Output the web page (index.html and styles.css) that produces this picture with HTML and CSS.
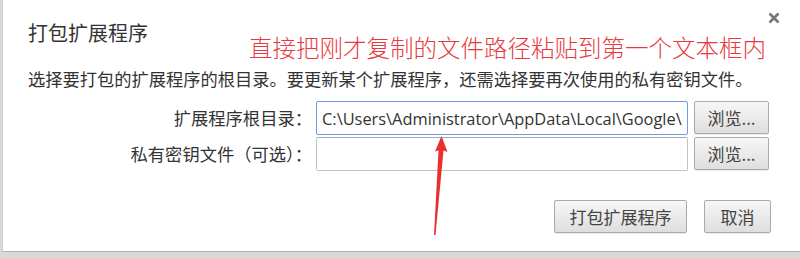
FILE: index.html
```html
<!DOCTYPE html>
<html lang="zh-CN">
    <head>
        <meta charset="UTF-8" />
        <title>打包扩展程序</title>
        <link rel="stylesheet" href="styles.css">
    </head>
    <body>
        <div class="dialog">
            <button class="close" aria-label="关闭">
                <svg width="12" height="12" viewBox="0 0 12 12">
                    <path d="M1.5 1.5 L10.5 10.5 M10.5 1.5 L1.5 10.5" stroke="#777" stroke-width="2.6" />
                </svg>
            </button>
            <div class="head">
                <h1 class="title">打包扩展程序</h1>
                <span class="note">直接把刚才复制的文件路径粘贴到第一个文本框内</span>
            </div>
            <p class="desc">选择要打包的扩展程序的根目录。要更新某个扩展程序，还需选择要再次使用的私有密钥文件。</p>
            <div class="form">
                <label class="label">扩展程序根目录：</label>
                <input class="field focused" type="text" value="C:\Users\Administrator\AppData\Local\Google\Chrome\User Data">
                <button class="btn browse">浏览...</button>
                <label class="label">私有密钥文件（可选）：</label>
                <input class="field" type="text" value="">
                <button class="btn browse">浏览...</button>
            </div>
            <div class="actions">
                <button class="btn pack">打包扩展程序</button>
                <button class="btn cancel">取消</button>
            </div>
        </div>

        <!-- annotation arrow -->
        <svg class="arrow" width="800" height="258" viewBox="0 0 800 258">
            <polygon points="441.5,136 447.5,152 443.5,150.5 435.5,235 434,235 438.5,150.5 435,151.5" fill="#e8302f" />
        </svg>
    </body>
</html>
```

FILE: styles.css
```css
body {
    margin: 0;
    width: 800px;
    height: 258px;
    overflow: hidden;
    background: #d9d9d9;
    font-family: "Noto Sans CJK SC", "Open Sans", sans-serif;
    color: #333;
    position: relative;
}
.dialog {
    position: relative;
    margin-left: 2px;
    height: 252px;
    box-sizing: border-box;
    background: #fff;
    border-left: 1px solid #cfcfcf;
    border-bottom: 1px solid #b0b0b0;
    padding: 20px 29px 0 25px;
}
.close {
    position: absolute;
    top: 12px;
    right: 20px;
    padding: 0;
    border: 0;
    background: none;
    line-height: 0;
}
.head {
    display: flex;
    align-items: flex-start;
    height: 47px;
}
.title {
    margin: 0;
    font-size: 20px;
    font-weight: 400;
    line-height: 26px;
    color: #333;
}
.note {
    margin: 12px 0 0 101px;
    font-size: 23.5px;
    line-height: 30px;
    color: #e8393e;
    font-weight: 300;
    white-space: nowrap;
}
.desc {
    margin: 0;
    font-size: 17.25px;
    line-height: 24px;
    color: #333;
    white-space: nowrap;
}
.form {
    display: grid;
    grid-template-columns: 284px 372px 77px;
    column-gap: 4px;
    row-gap: 2px;
    margin-top: 10px;
}
.form .btn {
    margin-left: 2px;
}
.label {
    text-align: right;
    font-size: 17.3px;
    line-height: 34px;
    white-space: nowrap;
}
.field {
    height: 34px;
    box-sizing: border-box;
    margin: 0;
    border: 1px solid #c3c3c3;
    border-top-color: #a9a9a9;
    border-radius: 2px;
    padding: 0 5px;
    font-family: "Open Sans", "Noto Sans CJK SC", sans-serif;
    font-size: 16.4px;
    color: #333;
    outline: none;
}
.field.focused {
    border-color: #6d9de6;
}
.btn {
    height: 33px;
    box-sizing: border-box;
    padding: 0;
    border: 1px solid #aaa;
    border-radius: 2px;
    background: linear-gradient(#f7f7f7, #dedede);
    box-shadow: 0 1px 0 rgba(0, 0, 0, 0.08);
    font-family: "Noto Sans CJK SC", sans-serif;
    font-size: 17px;
    color: #444;
}
.actions {
    display: flex;
    justify-content: flex-end;
    gap: 17px;
    margin-top: 29px;
}
.pack {
    width: 133px;
}
.cancel {
    width: 67px;
}
.arrow {
    position: absolute;
    left: 0;
    top: 0;
    pointer-events: none;
}
```
